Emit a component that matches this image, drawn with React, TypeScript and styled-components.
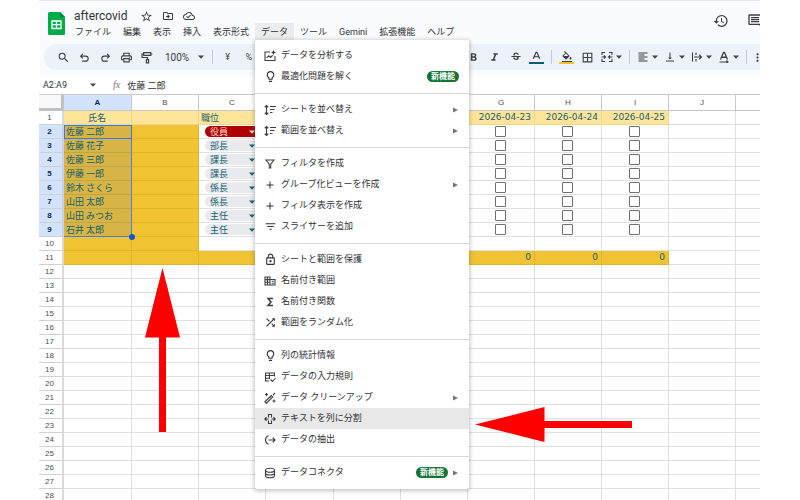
import React from 'react';
import styled, { createGlobalStyle, css } from 'styled-components';
import {
  MdAdd,
  MdBorderAll,
  MdFilterList,
  MdFormatAlignLeft,
  MdFormatBold,
  MdFormatColorFill,
  MdFormatItalic,
  MdHistory,
  MdMoreVert,
  MdOutlineCloudDone,
  MdOutlineDriveFileMove,
  MdOutlineInsertComment,
  MdOutlineLightbulb,
  MdOutlineLock,
  MdOutlinePrint,
  MdSearch,
  MdShuffle,
  MdStarBorder,
  MdStrikethroughS,
  MdVerticalAlignBottom,
} from 'react-icons/md';

const GlobalStyle = createGlobalStyle`
  * { box-sizing: border-box; }
  body {
    margin: 0;
    background: #fff;
    color: #3c4043;
    font-family: Roboto, "Noto Sans CJK JP", sans-serif;
    font-size: 9px;
  }
  button, input, select {
    margin: 0;
    padding: 0;
    border: 0;
    background: none;
    color: inherit;
    font: inherit;
  }
  svg { display: block; flex: none; }
`;

/* ---------- frame ---------- */

const Page = styled.div`
  position: relative;
  height: 100vh;
  overflow: hidden;
  padding: 0 40px 0 39px;
`;

const Frame = styled.div`
  overflow: hidden;
`;

const Top = styled.div`
  border-top: 1px solid #e6e8eb;
  background: #f9fbfe;
  padding-bottom: 6px;
`;

const Header = styled.header`
  display: flex;
  align-items: flex-start;
  padding: 8px 0 0 9px;
`;

const Logo = styled.svg`
  margin: 3px 4px 0 0;
`;

const TitleRow = styled.div`
  display: flex;
  align-items: center;
  gap: 9px;
  height: 14px;
  padding-left: 5px;
`;

const Title = styled.h1`
  margin: 0 4px 0 0;
  font: 400 12px/14px Roboto, sans-serif;
  color: #303236;
`;

const PlainButton = styled.button`
  display: flex;
  align-items: center;
  justify-content: center;
`;

const MenuBar = styled.nav`
  display: flex;
`;

const MenuBarItem = styled.button<{ $open?: boolean }>`
  height: 17px;
  padding: 2px 6px 0;
  white-space: nowrap;
  line-height: 15px;
  color: #303236;
  background: ${(p) => (p.$open ? '#ebecee' : 'transparent')};
`;

const MenuAnchor = styled.div`
  position: relative;
`;

const HeaderActions = styled.div`
  display: flex;
  gap: 18px;
  margin: 4px -3px 0 auto;
`;

/* ---------- toolbar ---------- */

const Toolbar = styled.div`
  display: flex;
  align-items: center;
  height: 26px;
  margin: 4px 0 0 5px;
  padding-left: 9px;
  border-radius: 13px 0 0 13px;
  background: #edf2fa;
`;

const Tool = styled.button<{ $wide?: boolean }>`
  display: flex;
  align-items: center;
  justify-content: center;
  flex: none;
  gap: ${(p) => (p.$wide ? '3px' : '0')};
  width: ${(p) => (p.$wide ? '27px' : '21px')};
  height: 20px;
  color: #3c4043;
`;

const ZoomTool = styled(Tool)`
  gap: 9px;
  width: auto;
  padding: 0 4px 0 7px;
  font-size: 10px;
`;

const MoreTool = styled(Tool)`
  width: 13px;
`;

const Divider = styled.span`
  flex: none;
  width: 1px;
  height: 14px;
  margin: 0 4px;
  background: #c7c9cc;
`;

const ToolGroup = styled.div<{ $apart?: boolean }>`
  display: flex;
  align-items: center;
  margin-left: ${(p) => (p.$apart ? '204px' : '0')};
`;

const Swatch = styled.span<{ $color: string }>`
  display: flex;
  flex-direction: column;
  align-items: center;
  width: 15px;
  border-bottom: 2px solid ${(p) => p.$color};
`;

/* ---------- formula bar ---------- */

const FormulaBar = styled.div`
  display: flex;
  align-items: center;
  height: 19px;
  padding-left: 4px;
  border-bottom: 1px solid #c9cbcd;
  background: #fff;
  color: #303236;
`;

const NameBox = styled.input`
  width: 47px;
`;

const Fx = styled.span`
  margin: 0 7px 0 17px;
  font: italic 10px/12px "Liberation Serif", serif;
  color: #6f7478;
`;

const FormulaInput = styled.input`
  flex: 1;
  min-width: 0;
`;

/* ---------- sheet ---------- */

const line = '#e0e1e2';
const gold = '#f1c232';
const cream = '#ffe599';
const goldLine = '#dfb42f';

const Sheet = styled.table`
  width: 100%;
  table-layout: fixed;
  border-collapse: separate;
  border-spacing: 0;

  tr > :last-child {
    border-right: 0;
  }
`;

const Col = styled.col<{ $w?: number }>`
  ${(p) => p.$w && `width: ${p.$w}px;`}
`;

const Corner = styled.td`
  padding: 0;
  border-right: 3px solid #bfc1c3;
  border-bottom: 3px solid #bfc1c3;
  background: #f8f9fa;
`;

const ColHead = styled.th<{ $on?: boolean }>`
  height: 16px;
  padding: 0;
  border-right: 1px solid #c6c8ca;
  border-bottom: 1px solid #c6c8ca;
  font: ${(p) => (p.$on ? 700 : 400)} 8px/14px "Liberation Sans", sans-serif;
  color: ${(p) => (p.$on ? '#0b2a5c' : '#4c5053')};
  background: ${(p) => (p.$on ? '#d3e3fd' : '#fff')};
`;

const RowHead = styled.th<{ $on?: boolean }>`
  height: 14px;
  padding: 0 2px 0 0;
  border-right: 2px solid ${(p) => (p.$on ? '#c3d3ee' : '#d9dadb')};
  border-bottom: 1px solid #cfd1d3;
  font: ${(p) => (p.$on ? 700 : 400)} 8px/13px "Liberation Sans", sans-serif;
  color: ${(p) => (p.$on ? '#0b2a5c' : '#4c5053')};
  background: ${(p) => (p.$on ? '#d3e3fd' : '#fff')};
`;

type Fill = 'none' | 'gold' | 'cream' | 'picked';

const fills: Record<Fill, ReturnType<typeof css>> = {
  none: css`background: #fff; border-color: ${line};`,
  gold: css`background: ${gold}; border-color: ${goldLine};`,
  cream: css`background: ${cream}; border-color: #eed695;`,
  picked: css`background: #d6b445; border-color: #4480e4 #4480e4 #c4a544 #4480e4;`,
};

const Cell = styled.td<{ $fill: Fill; $align?: string; $active?: boolean; $last?: boolean }>`
  position: relative;
  height: 14px;
  padding: 0 3px 0 2px;
  border-style: solid;
  border-width: 0 1px 1px 0;
  ${(p) => fills[p.$fill]}
  ${(p) => p.$active && 'outline: 1px solid #3b78e7; outline-offset: -1px;'}
  ${(p) => p.$last && 'border-bottom-color: #4480e4;'}
  font-size: 9px;
  line-height: 13px;
  font-family: ${(p) => (p.$align === 'right' ? '"DejaVu Sans", sans-serif' : '"Noto Sans CJK JP", sans-serif')};
  text-align: ${(p) => p.$align ?? 'left'};
  white-space: nowrap;
  color: #176270;
`;

const Handle = styled.span`
  position: absolute;
  right: -4px;
  bottom: -4px;
  z-index: 1;
  width: 6px;
  height: 6px;
  border-radius: 50%;
  background: #0b57d0;
`;

const Chip = styled.span<{ $red?: boolean }>`
  display: flex;
  align-items: center;
  height: 11px;
  margin: 0 3px 0 4px;
  padding: 0 4px 0 5px;
  border-radius: 6px;
  background: ${(p) => (p.$red ? '#b10202' : '#e8eaed')};
  color: ${(p) => (p.$red ? '#ffdcd8' : '#176270')};
`;

const ChipSelect = styled.select`
  flex: 1;
  min-width: 0;
  height: 11px;
  appearance: none;
  line-height: 11px;
`;

const Tick = styled.input`
  display: block;
  width: 11px;
  height: 11px;
  margin: 0 auto;
  appearance: none;
  border: 1px solid #707070;
  border-radius: 1px;
  background: #fff;
`;

/* ---------- drop-down menu ---------- */

const Menu = styled.div`
  position: absolute;
  top: 100%;
  left: 0;
  z-index: 5;
  width: 214px;
  padding: 5px 0 6px;
  border-radius: 2px;
  background: #fff;
  box-shadow: 0 1px 4px 1px rgba(60, 64, 67, 0.3);
`;

const MenuItem = styled.button<{ $hot?: boolean }>`
  display: flex;
  align-items: center;
  gap: 5px;
  width: 100%;
  height: 21px;
  padding: 0 10px 0 9px;
  line-height: 21px;
  color: #303236;
  background: ${(p) => (p.$hot ? '#e8e8e8' : 'transparent')};
`;

const MenuIcon = styled.span`
  display: flex;
  justify-content: center;
  flex: none;
  width: 12px;
`;

const MenuLabel = styled.span`
  flex: 1;
  text-align: left;
  white-space: nowrap;
`;

const Rule = styled.hr`
  height: 1px;
  margin: 6px 0 5px;
  border: 0;
  background: #d5d7d9;
`;

const Badge = styled.span`
  padding: 0 4px;
  border-radius: 6px;
  background: #137333;
  color: #fff;
  font-size: 8px;
  font-weight: 700;
  line-height: 11px;
`;

const Arrow = styled.svg<{ $x: number; $y: number }>`
  position: absolute;
  left: ${(p) => p.$x}px;
  top: ${(p) => p.$y}px;
  z-index: 6;
`;

/* ---------- drawings ---------- */

const Caret = ({ color = '#444746' }: { color?: string }) => (
  <svg width="6" height="4" viewBox="0 0 6 4"><path d="M0 0.5h6L3 3.7z" fill={color} /></svg>
);

const Glyph = ({ children, size = 12 }: { children: React.ReactNode; size?: number }) => (
  <svg width={size} height={size} viewBox="0 0 24 24" fill="none" stroke="#3c4043" strokeWidth="2.2">
    {children}
  </svg>
);

const icons: Record<string, React.ReactNode> = {
  analyze: (
    <Glyph>
      <path d="M12 4H2v17h20V12" />
      <path d="M5.500 16l4-4.500 3.500 3.500 4.500-4.500" />
      <path d="M19 0l1.400 3.200L24 5l-3.600 1.600L19 10l-1.400-3.400L14 5l3.600-1.800z" fill="#3c4043" stroke="none" />
    </Glyph>
  ),
  bulb: <MdOutlineLightbulb size={13} />,
  sort: (
    <Glyph>
      <path d="M5 3v18M1.500 6.500L5 3l3.500 3.500M1.500 17.500L5 21l3.500-3.500M12 5h12M12 11h9M12 17h5" />
    </Glyph>
  ),
  funnel: <Glyph><path d="M4 4h16l-6.500 8.500V20h-3v-7.500z" /></Glyph>,
  plus: <MdAdd size={12} />,
  slicer: <MdFilterList size={13} />,
  lock: <MdOutlineLock size={13} />,
  named: (
    <Glyph>
      <path d="M2 4h10v16H2zM12 9h10v11H12M2 9.300h10M2 14.600h10M7 4v16M15.500 12.500h4M15.500 16.500h4" />
    </Glyph>
  ),
  sigma: <Glyph><path d="M18 5H8l6 7-6 7h10" strokeWidth="3" /></Glyph>,
  shuffle: <MdShuffle size={13} />,
  rules: (
    <Glyph>
      <path d="M10 20H3V4h18v7M3 9h18M11 4v5M3 14.500h9M11 9v7M13 17l4 4 6-7" />
    </Glyph>
  ),
  wand: (
    <Glyph>
      <path d="M2 19.500L14.500 7l3 3L5 22.500zM11.500 10l3 3" />
      <path d="M5 2v6M2 5h6M20 15v6M17 18h6M18 6l4-4" />
    </Glyph>
  ),
  split: (
    <Glyph>
      <path d="M9 9V3h6v6M9 15v6h6v-6M1.500 12H9M15 12h7.500M5 8.500L1.500 12 5 15.500M19 8.500l3.500 3.500-3.500 3.500" />
    </Glyph>
  ),
  extract: (
    <Glyph>
      <path d="M9 3.500C4.500 5 3 8.500 3 12s1.500 7 6 8.500M9 12h13M17.500 7.500L22 12l-4.500 4.500" />
    </Glyph>
  ),
  database: (
    <Glyph>
      <ellipse cx="12" cy="6.500" rx="9" ry="4" />
      <path d="M3 6.500v11c0 2.200 4 4 9 4s9-1.800 9-4v-11M3 12c0 2.200 4 4 9 4s9-1.800 9-4" />
    </Glyph>
  ),
};

const TurnIcon = ({ forward }: { forward?: boolean }) => (
  <Glyph size={11}>
    <path
      d={forward
        ? 'M20 9H9.500a5 5 0 0 0 0 11H17M15.500 4L20.500 9l-5 5'
        : 'M4 9h10.500a5 5 0 0 1 0 11H7M8.500 4L3.500 9l5 5'}
      strokeWidth="2.400"
    />
  </Glyph>
);

const PaintRoller = () => (
  <Glyph size={13}><path d="M5 3h13v5H5zM5 5.500H2V12h10v4M10 16h4v6h-4zM18 5.500h3" /></Glyph>
);

const MergeIcon = () => (
  <Glyph><path d="M8 3H2v5M2 16v5h6M16 3h6v5M22 16v5h-6M1 12h8M6 9l3 3-3 3M23 12h-8M18 9l-3 3 3 3" /></Glyph>
);

const OverflowIcon = () => (
  <Glyph><path d="M3 3v18M10 3v5M10 16v5M6 12h15M16.500 7.500L21 12l-4.500 4.500" /></Glyph>
);

const LetterIcon = ({ slant }: { slant?: boolean }) => (
  <Glyph size={slant ? 12 : 11}>
    <path d="M5 17L11 3h2l6 14M7.500 12.500h9" strokeWidth="2.600" />
    {slant && <path d="M3 22h17M17 19l3 3-3 2" />}
  </Glyph>
);

/* ---------- data ---------- */

type Entry = { icon: string; label: string; badge?: boolean; sub?: boolean; hot?: boolean };

const groups: Entry[][] = [
  [
    { icon: 'analyze', label: 'データを分析する' },
    { icon: 'bulb', label: '最適化問題を解く', badge: true },
  ],
  [
    { icon: 'sort', label: 'シートを並べ替え', sub: true },
    { icon: 'sort', label: '範囲を並べ替え', sub: true },
  ],
  [
    { icon: 'funnel', label: 'フィルタを作成' },
    { icon: 'plus', label: 'グループ化ビューを作成', sub: true },
    { icon: 'plus', label: 'フィルタ表示を作成' },
    { icon: 'slicer', label: 'スライサーを追加' },
  ],
  [
    { icon: 'lock', label: 'シートと範囲を保護' },
    { icon: 'named', label: '名前付き範囲' },
    { icon: 'sigma', label: '名前付き関数' },
    { icon: 'shuffle', label: '範囲をランダム化' },
  ],
  [
    { icon: 'bulb', label: '列の統計情報' },
    { icon: 'rules', label: 'データの入力規則' },
    { icon: 'wand', label: 'データ クリーンアップ', sub: true },
    { icon: 'split', label: 'テキストを列に分割', hot: true },
    { icon: 'extract', label: 'データの抽出' },
  ],
  [{ icon: 'database', label: 'データコネクタ', badge: true, sub: true }],
];

const people = [
  ['佐藤 二郎', '役員'],
  ['佐藤 花子', '部長'],
  ['佐藤 三郎', '課長'],
  ['伊藤 一郎', '課長'],
  ['鈴木 さくら', '係長'],
  ['山田 太郎', '係長'],
  ['山田 みつお', '主任'],
  ['石井 太郎', '主任'],
];

const dates = ['2026-04-23', '2026-04-24', '2026-04-25'];
const heads = ['A', 'B', 'C', '', '', '', 'G', 'H', 'I', 'J', ''];
const widths = [68, 67, 67, 68, 67, 67, 67, 67, 67, 67];
const before = ['ファイル', '編集', '表示', '挿入', '表示形式'];
const after = ['ツール', 'Gemini', '拡張機能', 'ヘルプ'];

function DataMenu() {
  return (
    <Menu role="menu" aria-label="データ">
      {groups.map((group, g) => (
        <React.Fragment key={g}>
          {g > 0 && <Rule />}
          {group.map((e) => (
            <MenuItem key={e.label} role="menuitem" $hot={e.hot}>
              <MenuIcon>{icons[e.icon]}</MenuIcon>
              <MenuLabel>{e.label}</MenuLabel>
              {e.badge && <Badge>新機能</Badge>}
              {e.sub && (
                <svg width="6" height="6" viewBox="0 0 6 6"><path d="M0 0.500L5 3 0 5.500z" fill="#74777a" /></svg>
              )}
            </MenuItem>
          ))}
        </React.Fragment>
      ))}
    </Menu>
  );
}

function renderCell(row: number, col: number) {
  const key = `${row}-${col}`;
  const person = people[row - 2];
  if (row === 1 && col < 9) {
    const text = col === 0 ? '氏名' : col === 2 ? '職位' : dates[col - 6] ?? '';
    return (
      <Cell key={key} $fill="cream" $align={col === 0 ? 'center' : col > 5 ? 'right' : 'left'}>
        {text}
      </Cell>
    );
  }
  if (row === 11 && col < 9) {
    return <Cell key={key} $fill="gold" $align="right">{col > 5 ? '0' : ''}</Cell>;
  }
  if (person && col === 0) {
    return (
      <Cell key={key} $fill="picked" $active={row === 2} $last={row === 9}>
        {person[0]}
        {row === 9 && <Handle />}
      </Cell>
    );
  }
  if (row < 11 && row > 1 && col < 2) return <Cell key={key} $fill="gold" />;
  if (person && col === 2) {
    return (
      <Cell key={key} $fill="none">
        <Chip $red={row === 2}>
          <ChipSelect aria-label={`職位 ${row}`} defaultValue={person[1]}>
            <option>{person[1]}</option>
          </ChipSelect>
          <Caret color={row === 2 ? '#ffdcd8' : '#176270'} />
        </Chip>
      </Cell>
    );
  }
  if (person && col > 5 && col < 9) {
    return (
      <Cell key={key} $fill="none">
        <Tick type="checkbox" aria-label={`${person[0]} ${dates[col - 6]}`} />
      </Cell>
    );
  }
  return <Cell key={key} $fill="none" />;
}

export default function App() {
  return (
    <Page>
      <GlobalStyle />
      <Frame>
        <Top>
          <Header>
            <Logo width="17" height="23" viewBox="0 0 17 23">
              <path d="M1.500 0H12l5 5v16.500A1.500 1.500 0 0 1 15.500 23h-14A1.500 1.500 0 0 1 0 21.500v-20A1.500 1.500 0 0 1 1.500 0z" fill="#00ac47" />
              <path d="M12 0l5 5h-5z" fill="#00832d" />
              <path d="M4 9h9v7.500H4zM4 12.700h9M8.500 9v7.500" fill="none" stroke="#fff" strokeWidth="1.300" />
            </Logo>
            <div>
              <TitleRow>
                <Title>aftercovid</Title>
                <PlainButton aria-label="スター"><MdStarBorder size={13} /></PlainButton>
                <PlainButton aria-label="移動"><MdOutlineDriveFileMove size={12} /></PlainButton>
                <PlainButton aria-label="保存済み"><MdOutlineCloudDone size={12} /></PlainButton>
              </TitleRow>
              <MenuBar>
                {before.map((t) => <MenuBarItem key={t}>{t}</MenuBarItem>)}
                <MenuAnchor>
                  <MenuBarItem $open aria-haspopup="menu" aria-expanded="true">データ</MenuBarItem>
                  <DataMenu />
                </MenuAnchor>
                {after.map((t) => <MenuBarItem key={t}>{t}</MenuBarItem>)}
              </MenuBar>
            </div>
            <HeaderActions>
              <PlainButton aria-label="変更履歴"><MdHistory size={16} /></PlainButton>
              <PlainButton aria-label="コメント"><MdOutlineInsertComment size={16} /></PlainButton>
            </HeaderActions>
          </Header>
          <Toolbar role="toolbar">
            <ToolGroup>
              <Tool aria-label="検索"><MdSearch size={13} /></Tool>
              <Tool aria-label="元に戻す"><TurnIcon /></Tool>
              <Tool aria-label="やり直し"><TurnIcon forward /></Tool>
              <Tool aria-label="印刷"><MdOutlinePrint size={13} /></Tool>
              <Tool aria-label="書式を貼り付け"><PaintRoller /></Tool>
              <ZoomTool>100%<Caret /></ZoomTool>
              <Divider />
              <Tool>¥</Tool>
              <Tool>%</Tool>
            </ToolGroup>
            <ToolGroup $apart>
              <Tool aria-label="太字"><MdFormatBold size={13} /></Tool>
              <Tool aria-label="斜体"><MdFormatItalic size={13} /></Tool>
              <Tool aria-label="取り消し線"><MdStrikethroughS size={12} /></Tool>
              <Tool aria-label="文字の色"><Swatch $color="#0b5a73"><LetterIcon /></Swatch></Tool>
              <Divider />
              <Tool aria-label="塗りつぶし"><Swatch $color={gold}><MdFormatColorFill size={12} viewBox="0 0 24 20" /></Swatch></Tool>
              <Tool aria-label="枠線"><MdBorderAll size={13} /></Tool>
              <Tool $wide aria-label="結合"><MergeIcon /><Caret /></Tool>
              <Divider />
              <Tool $wide aria-label="水平配置"><MdFormatAlignLeft size={12} /><Caret /></Tool>
              <Tool $wide aria-label="垂直配置"><MdVerticalAlignBottom size={12} /><Caret /></Tool>
              <Tool $wide aria-label="折り返し"><OverflowIcon /><Caret /></Tool>
              <Tool $wide aria-label="回転"><LetterIcon slant /><Caret /></Tool>
              <Divider />
              <MoreTool aria-label="その他"><MdMoreVert size={13} /></MoreTool>
            </ToolGroup>
          </Toolbar>
        </Top>
        <FormulaBar>
          <NameBox aria-label="名前ボックス" defaultValue="A2:A9" />
          <Caret />
          <Fx>fx</Fx>
          <FormulaInput aria-label="数式バー" defaultValue="佐藤 二郎" />
        </FormulaBar>
        <Sheet>
          <colgroup>
            <Col $w={25} />
            {heads.map((_, i) => <Col key={i} $w={widths[i]} />)}
          </colgroup>
          <thead>
            <tr>
              <Corner />
              {heads.map((h, i) => <ColHead key={i} $on={i === 0}>{h}</ColHead>)}
            </tr>
          </thead>
          <tbody>
            {Array.from({ length: 28 }, (_, r) => r + 1).map((row) => (
              <tr key={row}>
                <RowHead $on={row > 1 && row < 10}>{row}</RowHead>
                {heads.map((_, col) => renderCell(row, col))}
              </tr>
            ))}
          </tbody>
        </Sheet>
      </Frame>
      <Arrow $x={145} $y={268} width="35" height="164" viewBox="0 0 35 164">
        <path d="M17.500 0L35 69.500H21V164H14V69.500H0z" fill="#f00" />
      </Arrow>
      <Arrow $x={475} $y={407} width="157" height="35" viewBox="0 0 157 35">
        <path d="M0 17.500L69.500 0V14H157v7H69.500v14z" fill="#f00" />
      </Arrow>
    </Page>
  );
}
